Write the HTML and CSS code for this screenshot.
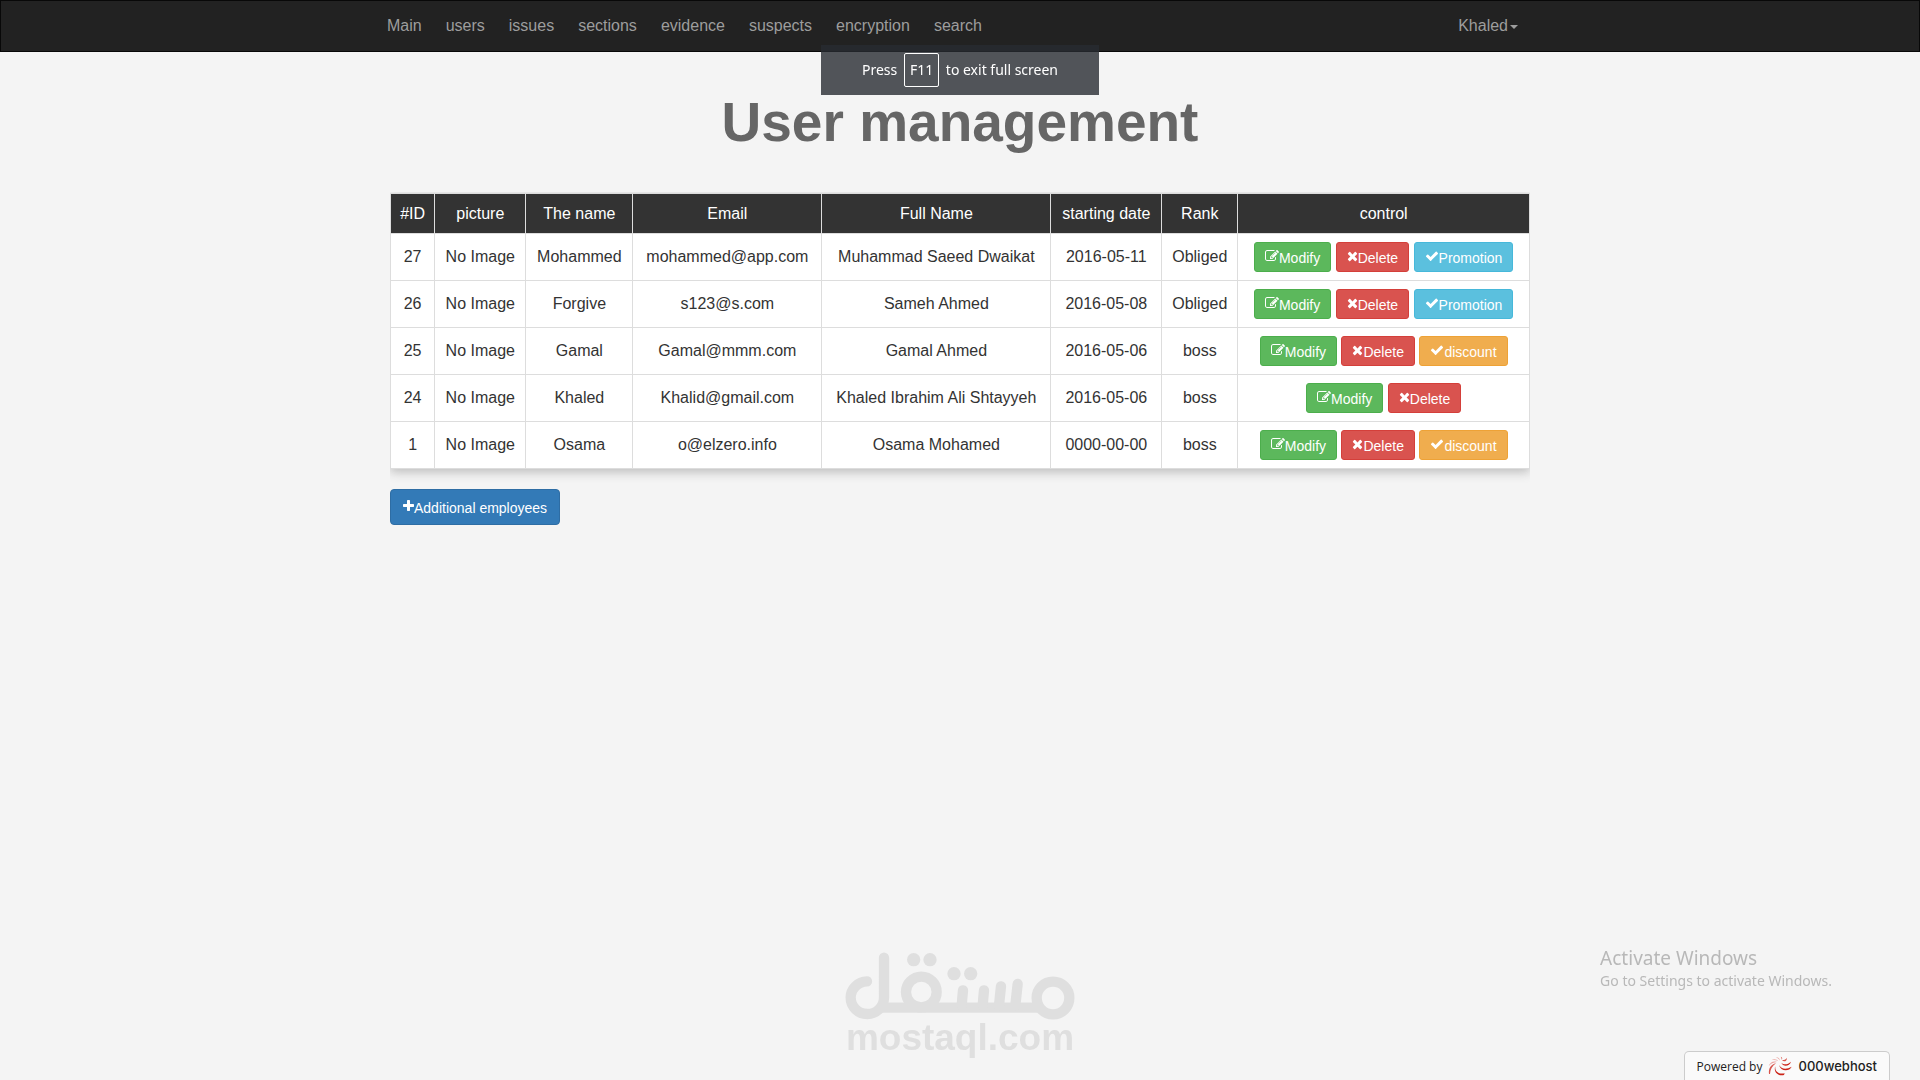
FILE: index.html
```html
<!DOCTYPE html>
<html lang="en">
<head>
  <meta charset="UTF-8">
  <meta name="viewport" content="width=device-width, initial-scale=1.0">
  <title>User management</title>
  <link rel="stylesheet" href="styles.css">
</head>
<body>

  <!-- Icons used by the buttons -->
  <svg class="icon-defs" width="0" height="0" aria-hidden="true">
    <symbol id="icon-edit" viewBox="0 0 1792 1792"><path d="M888 1184l116-116-152-152-116 116v56h96v96h56zm440-720q-16-16-33 1l-350 350q-17 17-1 33t33-1l350-350q17-17 1-33zm80 594v190q0 119-84.500 203.500t-203.500 84.500h-832q-119 0-203.500-84.500t-84.500-203.500v-832q0-119 84.500-203.500t203.500-84.500h832q63 0 117 25 15 7 18 23 3 17-9 29l-49 49q-14 14-32 8-23-6-45-6h-832q-66 0-113 47t-47 113v832q0 66 47 113t113 47h832q66 0 113-47t47-113v-126q0-13 9-22l64-64q15-15 35-7t20 29zm-96-738l288 288-672 672h-288v-288zm444 132l-92 92-288-288 92-92q28-28 68-28t68 28l152 152q28 28 28 68t-28 68z"/></symbol>
    <symbol id="icon-close" viewBox="192 0 1408 1792"><path d="M1490 1322q0 40-28 68l-136 136q-28 28-68 28t-68-28l-294-294-294 294q-28 28-68 28t-68-28l-136-136q-28-28-28-68t28-68l294-294-294-294q-28-28-28-68t28-68l136-136q28-28 68-28t68 28l294 294 294-294q28-28 68-28t68 28l136 136q28 28 28 68t-28 68l-294 294 294 294q28 28 28 68z"/></symbol>
    <symbol id="icon-check" viewBox="0 0 1792 1792"><path d="M1671 566q0 40-28 68l-724 724-136 136q-28 28-68 28t-68-28l-136-136-362-362q-28-28-28-68t28-68l136-136q28-28 68-28t68 28l294 295 656-657q28-28 68-28t68 28l136 136q28 28 28 68z"/></symbol>
    <symbol id="icon-plus" viewBox="192 0 1408 1792"><path d="M1600 736v192q0 40-28 68t-68 28h-416v416q0 40-28 68t-68 28h-192q-40 0-68-28t-28-68v-416h-416q-40 0-68-28t-28-68v-192q0-40 28-68t68-28h416v-416q0-40 28-68t68-28h192q40 0 68 28t28 68v416h416q40 0 68 28t28 68z"/></symbol>
  </svg>

  <!-- Navbar -->
  <nav class="navbar">
    <div class="container navbar-inner">
      <ul class="nav">
        <li><a href="#">Main</a></li>
        <li><a href="#">users</a></li>
        <li><a href="#">issues</a></li>
        <li><a href="#">sections</a></li>
        <li><a href="#">evidence</a></li>
        <li><a href="#">suspects</a></li>
        <li><a href="#">encryption</a></li>
        <li><a href="#">search</a></li>
      </ul>
      <a class="user-menu" href="#">Khaled<span class="caret"></span></a>
    </div>
  </nav>

  <!-- Full screen hint -->
  <div class="fullscreen-hint">Press <kbd>F11</kbd> to exit full screen</div>

  <!-- Users -->
  <main class="container">
    <h1>User management</h1>
    <div class="table-responsive">
      <table class="main-table">
        <thead>
          <tr>
            <th>#ID</th>
            <th>picture</th>
            <th>The name</th>
            <th>Email</th>
            <th>Full Name</th>
            <th>starting date</th>
            <th>Rank</th>
            <th>control</th>
          </tr>
        </thead>
        <tbody>
          <tr>
            <td>27</td>
            <td>No Image</td>
            <td>Mohammed</td>
            <td>mohammed@app.com</td>
            <td>Muhammad Saeed Dwaikat</td>
            <td>2016-05-11</td>
            <td>Obliged</td>
            <td class="control">
              <button class="btn btn-success"><svg class="icon"><use href="#icon-edit"/></svg>Modify</button>
              <button class="btn btn-danger"><svg class="icon icon-narrow"><use href="#icon-close"/></svg>Delete</button>
              <button class="btn btn-info"><svg class="icon"><use href="#icon-check"/></svg>Promotion</button>
            </td>
          </tr>
          <tr>
            <td>26</td>
            <td>No Image</td>
            <td>Forgive</td>
            <td>s123@s.com</td>
            <td>Sameh Ahmed</td>
            <td>2016-05-08</td>
            <td>Obliged</td>
            <td class="control">
              <button class="btn btn-success"><svg class="icon"><use href="#icon-edit"/></svg>Modify</button>
              <button class="btn btn-danger"><svg class="icon icon-narrow"><use href="#icon-close"/></svg>Delete</button>
              <button class="btn btn-info"><svg class="icon"><use href="#icon-check"/></svg>Promotion</button>
            </td>
          </tr>
          <tr>
            <td>25</td>
            <td>No Image</td>
            <td>Gamal</td>
            <td>Gamal@mmm.com</td>
            <td>Gamal Ahmed</td>
            <td>2016-05-06</td>
            <td>boss</td>
            <td class="control">
              <button class="btn btn-success"><svg class="icon"><use href="#icon-edit"/></svg>Modify</button>
              <button class="btn btn-danger"><svg class="icon icon-narrow"><use href="#icon-close"/></svg>Delete</button>
              <button class="btn btn-warning"><svg class="icon"><use href="#icon-check"/></svg>discount</button>
            </td>
          </tr>
          <tr>
            <td>24</td>
            <td>No Image</td>
            <td>Khaled</td>
            <td>Khalid@gmail.com</td>
            <td>Khaled Ibrahim Ali Shtayyeh</td>
            <td>2016-05-06</td>
            <td>boss</td>
            <td class="control">
              <button class="btn btn-success"><svg class="icon"><use href="#icon-edit"/></svg>Modify</button>
              <button class="btn btn-danger"><svg class="icon icon-narrow"><use href="#icon-close"/></svg>Delete</button>
            </td>
          </tr>
          <tr>
            <td>1</td>
            <td>No Image</td>
            <td>Osama</td>
            <td>o@elzero.info</td>
            <td>Osama Mohamed</td>
            <td>0000-00-00</td>
            <td>boss</td>
            <td class="control">
              <button class="btn btn-success"><svg class="icon"><use href="#icon-edit"/></svg>Modify</button>
              <button class="btn btn-danger"><svg class="icon icon-narrow"><use href="#icon-close"/></svg>Delete</button>
              <button class="btn btn-warning"><svg class="icon"><use href="#icon-check"/></svg>discount</button>
            </td>
          </tr>
        </tbody>
      </table>
    </div>
    <button class="btn btn-primary"><svg class="icon icon-narrow"><use href="#icon-plus"/></svg>Additional employees</button>
  </main>

  <!-- Mostaql logo -->
  <div class="mostaql">
    <svg width="230" height="68" viewBox="75 35 690 204" role="img" aria-label="مستقل">
      <g fill="none" stroke="#dfdfdf" stroke-width="31" stroke-linecap="round">
        <path d="M192 52V173A50 49 0 1 1 141 123"/>
        <circle cx="304" cy="155" r="46"/>
        <circle cx="699" cy="173" r="49"/>
        <path d="M190 202H650"/>
        <path d="M429 150L425 195M492 150L488 195M543 138L537 195M593 131L586 195"/>
      </g>
      <g fill="#dfdfdf">
        <circle cx="281" cy="58" r="20"/>
        <circle cx="330" cy="58" r="20"/>
        <circle cx="402" cy="100" r="20"/>
        <circle cx="452" cy="100" r="20"/>
      </g>
    </svg>
    <span>mostaql.com</span>
  </div>

  <!-- Windows notice -->
  <div class="activate">
    <p class="activate-title">Activate Windows</p>
    <p>Go to Settings to activate Windows.</p>
  </div>

  <!-- Hosting badge -->
  <a class="powered" href="#">
    Powered by
    <svg width="24" height="20" viewBox="0 0 72 60" aria-hidden="true">
      <g fill="#cc2418">
        <path d="M22 31C20 45 30 56 50 52L48 57C32 62 15 48 22 31Z"/>
        <path d="M33 27C40 40 56 41 71 32C64 47 38 47 33 27Z"/>
        <path d="M40 20C48 28 60 25 69 17C65 31 45 34 40 20Z"/>
      </g>
      <g fill="#d8564e">
        <path d="M3 54C1 38 8 26 24 22C12 31 7 41 6 54Z"/>
        <path d="M42 12C48 13 54 10 57 5C57 15 48 20 42 12Z"/>
        <path d="M38 2C43 3 44 8 41 11C41 7 40 4 38 2Z"/>
      </g>
      <g fill="#eba5a1">
        <path d="M2 31C6 18 16 14 27 18C16 19 8 23 2 31Z"/>
        <path d="M10 13C18 7 27 9 31 16C24 12 18 11 10 13Z"/>
        <path d="M23 4C31 3 36 8 35 14C32 8 29 6 23 4Z"/>
      </g>
    </svg>
    <span class="host-name">000webhost</span>
  </a>

</body>
</html>
```
FILE: styles.css
```css
* {
  box-sizing: border-box;
}

body {
  margin: 0;
  min-height: 100vh;
  font-family: "Liberation Sans", Arial, sans-serif;
  font-size: 16px;
  line-height: 23px;
  color: #333;
  background-color: #f4f4f4;
}

a {
  text-decoration: none;
}

.icon-defs {
  position: absolute;
}

.container {
  max-width: 1170px;
  margin: 0 auto;
  padding: 0 15px;
}

/* Navbar */
.navbar {
  background-color: #222;
  border: 1px solid #080808;
}

.navbar-inner {
  display: flex;
  justify-content: space-between;
  padding: 0;
}

.nav {
  display: flex;
  list-style: none;
  margin: 0;
  padding: 0;
}

.nav a, .user-menu {
  display: block;
  padding: 13px 12px 14px;
  color: #9d9d9d;
}

.user-menu {
  padding-right: 27px;
}

.caret {
  display: inline-block;
  margin-left: 2px;
  vertical-align: middle;
  border-top: 4px solid;
  border-right: 4px solid transparent;
  border-left: 4px solid transparent;
}

/* Full screen hint */
.fullscreen-hint {
  position: fixed;
  top: 45px;
  left: 50%;
  transform: translateX(-50%);
  width: 278px;
  height: 50px;
  padding-top: 8px;
  text-align: center;
  font-family: "Noto Sans", sans-serif;
  font-size: 14px;
  line-height: 34px;
  color: #fff;
  background-color: rgba(40, 44, 50, 0.8);
}

.fullscreen-hint kbd {
  display: inline-block;
  margin: 0 3px;
  padding: 0 5px;
  font: inherit;
  line-height: 32px;
  border: 1px solid #fff;
  border-radius: 2px;
}

/* Page title */
h1 {
  margin: 40px 0;
  font-size: 55px;
  line-height: 60px;
  text-align: center;
  color: #666;
}

/* Users table */
.table-responsive {
  overflow-x: auto;
  padding: 1px 0 20px;
}

.main-table {
  width: 100%;
  border-collapse: collapse;
  text-align: center;
  background-color: #fff;
  box-shadow: 0 3px 10px #bbb;
}

.main-table th, .main-table td {
  padding: 8px;
  border: 1px solid #ddd;
}

.main-table th {
  font-weight: normal;
  color: #fff;
  background-color: #333;
}

.main-table td {
  padding: 7px 8px 9px;
}

.main-table .control {
  padding: 8px;
  line-height: 0;
}

/* Buttons */
.btn {
  padding: 6px 10px 4px;
  font-family: inherit;
  font-size: 14px;
  line-height: 18px;
  color: #fff;
  border: 1px solid;
  border-radius: 3px;
  cursor: pointer;
}

.btn-success {
  background-color: #5cb85c;
  border-color: #4cae4c;
}

.btn-danger {
  background-color: #d9534f;
  border-color: #d43f3a;
}

.btn-info {
  background-color: #5bc0de;
  border-color: #46b8da;
}

.btn-warning {
  background-color: #f0ad4e;
  border-color: #eea236;
}

.btn-primary {
  padding: 9px 12px 7px;
  background-color: #337ab7;
  border-color: #2e6da4;
  border-radius: 4px;
}

.icon {
  width: 14px;
  height: 14px;
  fill: #fff;
  vertical-align: 0;
}

.icon-narrow {
  width: 11px;
}

/* Mostaql logo */
.mostaql {
  position: fixed;
  bottom: 24px;
  left: 50%;
  transform: translateX(-50%);
  display: flex;
  flex-direction: column;
  align-items: center;
  font-size: 37px;
  font-weight: bold;
  line-height: 36px;
  color: #dfdfdf;
}

/* Windows notice */
.activate {
  position: fixed;
  right: 88px;
  bottom: 89px;
  font-family: "Noto Sans", sans-serif;
  font-size: 14px;
  line-height: 20px;
  color: #b8b8b8;
}

.activate p {
  margin: 0;
}

.activate .activate-title {
  font-size: 19px;
  line-height: 26px;
}

/* Hosting badge */
.powered {
  position: fixed;
  right: 30px;
  bottom: 0;
  display: flex;
  align-items: center;
  gap: 6px;
  height: 29px;
  padding: 0 12px;
  font-family: "Open Sans", sans-serif;
  font-size: 12px;
  color: #222;
  background-color: #fafafa;
  border: 1px solid #ccc;
  border-bottom: none;
  border-radius: 5px 5px 0 0;
}

.host-name {
  font-family: Inter, sans-serif;
  font-size: 13px;
  font-weight: 500;
}
```
